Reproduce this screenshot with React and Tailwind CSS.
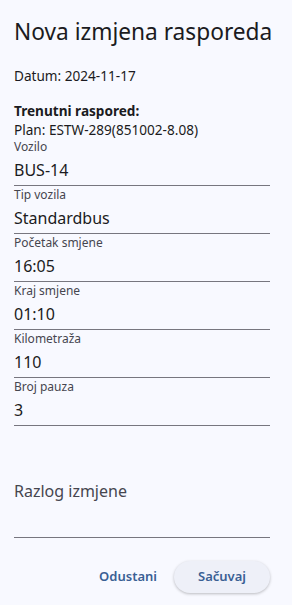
export default function App() {
  const fields = [
    ["Vozilo", "BUS-14"],
    ["Tip vozila", "Standardbus"],
    ["Početak smjene", "16:05"],
    ["Kraj smjene", "01:10"],
    ["Kilometraža", "110"],
    ["Broj pauza", "3"],
  ];
  return (
    <div className="w-[292px] h-[605px] bg-[#f8f9ff] text-[#1b1b21] overflow-hidden" style={{ fontFamily: '"Segoe UI", "Noto Sans", sans-serif' }}>
      <div className="px-[14px] pt-[18px]">
        <h1 className="text-[22.7px] leading-[28px] font-normal text-[#1b1b21]">Nova izmjena rasporeda</h1>
        <div className="mt-[20px] text-[13.6px] leading-[19px]">Datum: 2024-11-17</div>
        <div className="mt-[16px] text-[13.6px] leading-[19px] font-bold">Trenutni raspored:</div>
        <div className="text-[13.6px] leading-[19px]">Plan: ESTW-289(851002-8.08)</div>
        <div className="w-[256px] -mt-[1px]">
          {fields.map(([l, v]) => (
            <div key={l} className="h-[48px] border-b border-[#77767f] flex flex-col">
              <div className="text-[12px] leading-[16px] text-[#46464f] mt-[1px]">{l}</div>
              <div className="text-[16px] leading-[22px] mt-[4px]">{v}</div>
            </div>
          ))}
          <div className="mt-[50px] h-[62px] border-b border-[#77767f]">
            <div className="pt-[4px] text-[16px] leading-[22px] text-[#46464f]">Razlog izmjene</div>
          </div>
        </div>
        <div className="w-[256px] mt-[23px] flex justify-end items-center gap-[5px]">
          <button className="px-[12px] h-[32px] text-[13px] font-semibold text-[#3a5f94]">Odustani</button>
          <button className="w-[96px] h-[32px] rounded-full bg-[#eef0f8] shadow-[0_1px_3px_rgba(0,0,0,0.25)] text-[13px] font-semibold text-[#3a5f94]">Sačuvaj</button>
        </div>
      </div>
    </div>
  );
}
